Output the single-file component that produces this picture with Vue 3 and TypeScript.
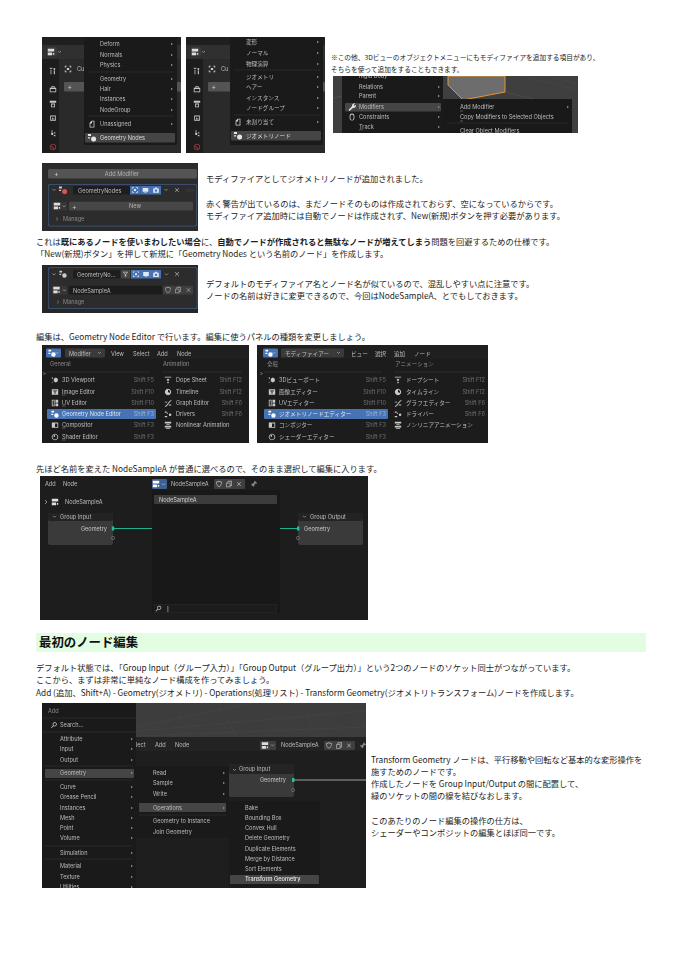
<script setup lang="ts">
import { h } from 'vue'

type Box = [number, number, number, number, string, number?]
type Line = [number, number, number, number, string, number?]
type Label = [number, number, string, string?, string?, number?, number?]
type Mark = [string, number, number, string?, number?]

interface Fig {
  w: number
  h: number
  ox?: number
  bg: string
  boxes: Box[]
  lines?: Line[]
  labels: Label[]
  tris?: [number, number][]
  marks?: Mark[]
  polys?: [string, string, string, number][]
}

const TXT = '#bdbdbd'
const DIM = '#8a8a8a'
const MENU = '#1a1a1a'
const BLUE = '#4772b3'
const SEP = '#303030'

// icon strokes on a 10x10 box: [path, fill]
const ICONS: Record<string, [string, string?][]> = {
  nodes: [['M.5 1h3.4v2.2H.5zM.5 4.6h2.4v1.6H.5z'], ['M4 6.8a2.8 2.8 0 1 0 5.6 0a2.8 2.8 0 1 0-5.6 0z']],
  nodesRed: [['M.5 1h3.4v2.2H.5zM.5 4.6h2.4v1.6H.5z'], ['M4 6.8a2.8 2.8 0 1 0 5.6 0a2.8 2.8 0 1 0-5.6 0z', '#e0505a']],
  doc: [['M2 9.5V3.5L4.5 1H8v8.5zM3 8.5h4V2H5v2.5H3z']],
  tree: [['M1 .8h8v3.6H1zM1 5.6h5.4v3.6H1zM7.4 6.4H9v2H7.4z']],
  ring: [['M5 .8a4.2 4.2 0 1 0 .01 0zM5 2.4a2.6 2.6 0 1 1-.01 0z']],
  select: [['M1 1h2.4v1H2v1.4H1zM6.6 1H9v2.4H8V2H6.6zM1 6.6h1V8h1.4v1H1zM8 6.6h1V9H6.6V8H8zM3.6 3.6h2.8v2.8H3.6z']],
  tool: [['M2 9V3.5h1V9zM1 2.5V1h1v.8h1V1h1v1.5zM6 9V5h1.4v4zM5.5 1.5h2.4l-.5 3H6z']],
  box: [['M1 3.5h8V9H1zM3 3.5V1.5h4v2H6V2.5H4v1zM2 5v3h6V5z']],
  printer: [['M1 1h8v2.5H1zM2.5 4.5h5V9h-5zM3.5 5.5v2.5h3V5.5z']],
  image: [['M1 1.5h8v7H1zM2.4 3v1.2h2v3h1.2v-3h2V3z']],
  photo: [['M1.5 2h7v6.5h-7zM2.5 3v4.5h5V3zM3 7l1.5-2.5 1 1.5 1-.8L7.2 7z']],
  wrench: [['M1 8.2L5 4.2a2.6 2.6 0 0 1 3.6-3L7 2.8 7.8 4l1.5-1.4A2.6 2.6 0 0 1 6 6L2.2 9.5z']],
  world: [['M5 1a4 4 0 1 0 .01 0zM5 2a3 3 0 1 1-.01 0z', '#b04048'], ['M3 3l4 4.4-.7.6L2.4 3.6z', '#b04048']],
  particles: [['M3 2h1.5v1.5H3zM6.5 4h1.5v1.5H6.5zM2.5 6a1.5 1.5 0 1 0 3 0a1.5 1.5 0 1 0-3 0zM6 7.5h2V9H6z']],
  constraint: [['M2 3.5a3 3 0 1 1 6 0v3a3 3 0 1 1-6 0zM3 4v2.6a2 2 0 1 0 4 0V4a2 2 0 1 0-4 0z']],
  viewport: [['M1 8l2.5-1.5V3.5L6 2l2.5 1.5v3L6 8 3.5 6.5 1 9z'], ['M1 2h1.5v1.5H1z']],
  uv: [['M1 1h3.5v8H1zM2 2v6h1.5V2zM5.6 1H9v3.6H5.6zM5.6 5.6H9V9H5.6z']],
  comp: [['M1 2h8v6.5H1zM5 3v4.5h3V3z']],
  shader: [['M5 1a4 4 0 1 0 .01 0zM5 2a3 3 0 1 1-.01 0zM5 2.6a2.4 2.4 0 0 0-2.2 1.6L5 5z']],
  dope: [['M1 1h8v1H1zM5 3l1.8 1.8L5 6.6 3.2 4.8zM5 7l1.2 1.2L5 9.4 3.8 8.2z']],
  timeline: [['M5 1a4 4 0 1 0 .01 0zM5 2.2L5 5l2.4 1.4A3 3 0 0 0 5 2.2z']],
  graph: [['M1 9c3-.4 3.4-5 8-7.6l.4.8C5.4 4.6 5 9.2 1.4 10z'], ['M1 3.4h3v1H1zM6 7h3v1H6z']],
  drivers: [['M1 2h2.4v1.4H1zM3.6 3.4h1.4v1.4H3.6zM6 6a1.6 1.6 0 1 0 3.2 0a1.6 1.6 0 1 0-3.2 0zM1 7.6h3V9H1z']],
  nla: [['M1 1h8v2.2H1zM3 4h4v1H3zM1 6h8v2.2H1zM2.4 8.8h5.2v.8H2.4z']],
  search: [['M6 1a3 3 0 1 0 .01 0zM6 2a2 2 0 1 1-.01 0zM3.6 5.7l.8.7L1.6 9.2.8 8.5z']],
  shield: [['M5 1l3.6 1.2c0 3.4-1 5.6-3.6 6.8C2.4 7.8 1.4 5.6 1.4 2.2zM5 2.1L2.4 3c.1 2.4.9 4 2.6 4.9C6.7 7 7.5 5.4 7.6 3z']],
  copy: [['M1.4 3.4H3V2l1-1h4.6v6.4H6.8V9H1.4zM2.4 4.4v3.6h3.4V4.4zM4 2.2v1.2h2.8v3h.8V2.2z']],
  cross: [['M2.2 1.5L5 4.3l2.8-2.8.7.7L5.7 5l2.8 2.8-.7.7L5 5.7 2.2 8.5l-.7-.7L4.3 5 1.5 2.2z']],
  pin: [['M6 1l3 3-1 .6-.7-.4-2 2 .2 1.6-.8.6L2.8 7 1.2 9.2.8 8.8 3 7.2 1.2 5.4l.6-.8 1.6.2 2-2-.4-.7z']],
  funnel: [['M1 1.4h8L6 5.4V9L4 7.8V5.4zM2.8 2.4L5 5l2.2-2.6z']],
  screen: [['M1 2h8v5.4H1zM3 8.2h4V9H3z']],
  camera: [['M1 3h2l.8-1.4h2.4L7 3h2v6H1zM5 4a1.8 1.8 0 1 0 .01 0z']]
}

const chev = (x: number, y: number, c = TXT): Line[] => [
  [x, y, x + 1.5, y + 1.5, c, 0.6],
  [x + 1.5, y + 1.5, x + 3, y, c, 0.6]
]

function menu(rows: [string, number][], x: number, arrowX?: number) {
  const labels: Label[] = rows.map(([s, y]) => [x, y + 2, s])
  const tris: [number, number][] =
    arrowX === undefined ? [] : rows.map(([, y]) => [arrowX, y] as [number, number])
  return { labels, tris }
}

function propsBase(menuX: number, hiY: number): Pick<Fig, 'boxes' | 'marks' | 'labels' | 'lines'> {
  return {
    boxes: [
      [0, 0, 139, 8, '#1f1f1f', 2],
      [0, 22, 17, 94, '#1d1d1d'],
      [0, 8, 139, 14, '#303030'],
      [5, 10, 10, 9, '#3a3a3a', 1],
      [22, 45, 117, 9.5, '#545454', 1],
      [menuX, 0, 93, 108, MENU, 1],
      [menuX + 1, hiY, 90, 9.5, '#454545', 1]
    ],
    marks: [
      ['tree', 9, 15, '#ddd', 8],
      ['tool', 11, 34, '#c9c9c9', 8],
      ['box', 11, 52, '#c9c9c9', 8],
      ['printer', 11, 67, '#c9c9c9', 8],
      ['photo', 11, 81, '#c9c9c9', 8],
      ['particles', 11, 96, '#c9c9c9', 8],
      ['world', 11, 110, '#b04048', 8],
      ['select', 26, 32, '#d0d0d0', 8]
    ],
    labels: [
      [35, 34, 'Cu'],
      [25.5, 52, '+', '#ccc', 'start', 7]
    ],
    lines: chev(16, 14)
  }
}

const enRows = menu(
  [['Deform', 7], ['Normals', 18], ['Physics', 28], ['Geometry', 42], ['Hair', 52], ['Instances', 62], ['NodeGroup', 73], ['Unassigned', 87]],
  58,
  129
)
const base1 = propsBase(42, 96)
const nodesMenuEn: Fig = {
  w: 139,
  h: 116,
  bg: '#2a2a2a',
  boxes: base1.boxes,
  lines: [...(base1.lines as Line[]), [46, 35, 132, 35, SEP], [46, 79, 132, 79, SEP]],
  labels: [...base1.labels, ...enRows.labels, [58, 102.5, 'Geometry Nodes', '#dcdcdc']],
  tris: enRows.tris,
  marks: [...(base1.marks as Mark[]), ['doc', 50, 87, '#ccc', 8], ['nodes', 50, 100.5, '#e4e4e4', 9]]
}

const jaRows = menu(
  [['変形', 5], ['ノーマル', 16], ['物理演算', 27], ['ジオメトリ', 40], ['ヘアー', 50], ['インスタンス', 61], ['ノードグループ', 71], ['未割り当て', 85]],
  60,
  131
)
const base2 = propsBase(44, 94)
const nodesMenuJa: Fig = {
  w: 139,
  h: 116,
  bg: '#2a2a2a',
  boxes: base2.boxes,
  lines: [...(base2.lines as Line[]), [48, 33, 134, 33, SEP], [48, 78, 134, 78, SEP]],
  labels: [...base2.labels, ...jaRows.labels, [60, 100.5, 'ジオメトリノード', '#dcdcdc']],
  tris: jaRows.tris,
  marks: [...(base2.marks as Mark[]), ['doc', 52, 85, '#ccc', 8], ['nodes', 52, 98.5, '#e4e4e4', 9]]
}

const objRows = menu([['Relations', 11], ['Parent', 20], ['Modifiers', 31], ['Constraints', 41], ['Track', 51]], 26, 105)
const objectMenu: Fig = {
  w: 245,
  h: 57,
  bg: '#3f3f3f',
  boxes: [
    [9, 0, 101, 57, MENU],
    [12, 27, 96, 8.5, '#454545', 1],
    [110, 23, 129, 34, '#191919', 1]
  ],
  polys: [['115,0 115,9 130,24 172,16 172,0', '#6d6d6d', '#e8932c', 1]],
  lines: [
    [0, 22, 9, 20, '#55623f', 0.6],
    [172, 16, 200, 23, '#7a4646', 0.5],
    [190, 0, 245, 14, '#4b4b4b', 0.5],
    [215, 0, 245, 8, '#4b4b4b', 0.5],
    [114, 47, 236, 47, SEP],
    [26, 53.8, 30, 53.8, TXT, 0.4],
    [127, 35, 130, 35, TXT, 0.4],
    [127, 45, 130, 45, TXT, 0.4]
  ],
  labels: [
    [26, 1.5, 'Rigid Body'],
    ...objRows.labels,
    [127, 33, 'Add Modifier'],
    [127, 43, 'Copy Modifiers to Selected Objects'],
    [127, 57, 'Clear Object Modifiers']
  ],
  tris: [...objRows.tris, [234, 31]],
  marks: [
    ['wrench', 19, 31, '#ddd', 9],
    ['constraint', 19, 41, '#ccc', 8]
  ]
}

const addModifier: Fig = {
  w: 156,
  h: 68,
  bg: '#2b2b2b',
  boxes: [
    [6, 6, 149, 9.5, '#545454', 1.5],
    [6, 21, 149, 42.5, '#3d5a80', 2],
    [6.7, 21.7, 147.6, 41, '#2c2c2c', 2],
    [31, 23, 57, 8.5, '#1e1e1e', 1],
    [88, 23, 10.5, 8.5, BLUE],
    [98.5, 23, 10.5, 8.5, BLUE],
    [109, 23, 10, 8.5, BLUE],
    [27, 38.7, 124, 8.7, '#474747', 1],
    [10, 38.7, 15, 8.7, '#363636', 1]
  ],
  lines: [
    ...chev(10.5, 26),
    ...chev(20.5, 42.5),
    ...chev(122.5, 26),
    [144, 26, 152, 26, '#444', 0.5],
    [144, 28, 152, 28, '#444', 0.5],
    [14, 54.5, 16, 56, DIM, 0.6],
    [16, 56, 14, 57.5, DIM, 0.6]
  ],
  labels: [
    [12, 12.7, '+', '#ccc', 'start', 7],
    [80, 13, 'Add Modifier', '#b4b4b4', 'middle'],
    [36, 29.5, 'GeometryNodes'],
    [30, 45.8, '+', '#ccc', 'start', 7],
    [93, 45.2, 'New', '#b4b4b4', 'middle'],
    [21, 58, 'Manage', DIM]
  ],
  marks: [
    ['nodesRed', 21, 27, '#ccc', 9],
    ['tree', 15, 43, '#ddd', 8],
    ['select', 93, 27, '#dfe8f6', 7],
    ['screen', 103.5, 27, '#dfe8f6', 7],
    ['camera', 114, 27, '#dfe8f6', 7],
    ['cross', 135, 27, '#b5b5b5', 6]
  ]
}

const sampleModifier: Fig = {
  w: 156,
  h: 48,
  bg: '#262626',
  boxes: [
    [6, 2.3, 149.5, 41.7, '#3d5a80', 2],
    [6.7, 3, 148, 40.3, '#2c2c2c', 2],
    [31, 5, 47, 8.5, '#1e1e1e', 1],
    [79, 5, 9, 8.5, '#454545'],
    [89, 5, 10, 8.5, BLUE],
    [99, 5, 10, 8.5, BLUE],
    [109, 5, 10, 8.5, BLUE],
    [10, 20.7, 15, 8.7, '#363636', 1],
    [26.7, 20.7, 93.5, 8.7, '#1c1c1c', 1],
    [121, 20.7, 30, 8.7, '#3e3e3e', 1]
  ],
  lines: [
    ...chev(10.5, 8.5),
    ...chev(21, 24.5),
    ...chev(123, 8.5),
    [15, 35.5, 17, 37, DIM, 0.6],
    [17, 37, 15, 38.5, DIM, 0.6]
  ],
  labels: [
    [35, 11.5, 'GeometryNo...'],
    [31, 27.5, 'NodeSampleA'],
    [21, 39, 'Manage', DIM]
  ],
  marks: [
    ['nodes', 21, 9, '#ccc', 8],
    ['funnel', 83.5, 9.2, '#bbb', 7],
    ['select', 94, 9.2, '#dfe8f6', 7],
    ['screen', 104, 9.2, '#dfe8f6', 7],
    ['camera', 114, 9.2, '#dfe8f6', 7],
    ['cross', 135, 9.2, '#b5b5b5', 6],
    ['tree', 14.5, 25, '#ddd', 8],
    ['shield', 126, 25, '#999', 8],
    ['copy', 136, 25, '#999', 8],
    ['cross', 146.5, 25, '#999', 6]
  ]
}

const EDITOR_Y = [35, 47, 58, 69, 80, 92]
const LEFT_ICONS = ['viewport', 'image', 'uv', 'nodes', 'comp', 'shader']
const RIGHT_ICONS = ['dope', 'timeline', 'graph', 'drivers', 'nla']

interface EditorCfg {
  w: number
  ox?: number
  tabs: [string, number][]
  modeX: number
  modeW: number
  mode: string
  general: string
  anim: string
  animX: number
  left: [string, string][]
  right: [string, string][]
  leftEnd: number
  rightIcon: number
  rightEnd: number
  underline: number
}

function editorFig(c: EditorCfg): Fig {
  const rightText = c.rightIcon + 8
  const labels: Label[] = [
    [c.modeX + 4, 10.5, c.mode],
    ...c.tabs.map(([s, x]) => [x, 10.5, s] as Label),
    [10, 21, c.general, DIM],
    [c.animX, 21, c.anim, DIM],
    [2.5, 31, '>', DIM]
  ]
  c.left.forEach(([s, k], i) => {
    const active = i === 3
    labels.push([22, EDITOR_Y[i] + 2, s, active ? '#dfe6f2' : TXT])
    labels.push([c.leftEnd, EDITOR_Y[i] + 2, k, active ? '#9db4d8' : '#6f6f6f', 'end'])
  })
  c.right.forEach(([s, k], i) => {
    labels.push([rightText, EDITOR_Y[i] + 2, s])
    if (k) labels.push([c.rightEnd, EDITOR_Y[i] + 2, k, '#6f6f6f', 'end'])
  })
  return {
    w: c.w,
    ox: c.ox,
    h: 98,
    bg: '#1c1c1c',
    boxes: [
      [0, 0, c.w, 14, '#1f1f1f'],
      [6, 3.5, 15, 9, BLUE, 1],
      [c.modeX, 3.5, c.modeW, 9, '#3a3a3a', 1],
      [7, 64, c.leftEnd - 5, 10, BLUE, 1]
    ],
    lines: [
      ...chev(15.5, 7),
      ...chev(c.modeX + c.modeW - 7, 7),
      [7, 27, c.leftEnd - 4, 27, SEP],
      [c.animX - 1, 27, c.w - 7, 27, SEP],
      ...[47, 58, 69, 80, 92].map((y) => [22, y + 3, 22 + c.underline, y + 3, TXT, 0.4] as Line)
    ],
    labels,
    marks: [
      ['nodes', 12, 8, '#fff', 8],
      ...LEFT_ICONS.map((n, i) => [n, 15, EDITOR_Y[i], i === 3 ? '#fff' : '#c9c9c9', 8] as Mark),
      ...RIGHT_ICONS.map((n, i) => [n, c.rightIcon, EDITOR_Y[i], '#c9c9c9', 8] as Mark)
    ]
  }
}

const editorsEn = editorFig({
  w: 209,
  ox: 2,
  tabs: [['View', 71], ['Select', 93], ['Add', 117], ['Node', 137]],
  modeX: 25,
  modeW: 40,
  mode: 'Modifier',
  general: 'General',
  anim: 'Animation',
  animX: 123,
  left: [
    ['3D Viewport', 'Shift F5'],
    ['Image Editor', 'Shift F10'],
    ['UV Editor', 'Shift F10'],
    ['Geometry Node Editor', 'Shift F3'],
    ['Compositor', 'Shift F3'],
    ['Shader Editor', 'Shift F3']
  ],
  right: [
    ['Dope Sheet', 'Shift F12'],
    ['Timeline', 'Shift F12'],
    ['Graph Editor', 'Shift F6'],
    ['Drivers', 'Shift F6'],
    ['Nonlinear Animation', '']
  ],
  leftEnd: 114,
  rightIcon: 128,
  rightEnd: 202,
  underline: 3.5
})

const editorsJa = editorFig({
  w: 231,
  tabs: [['ビュー', 94], ['選択', 118], ['追加', 137], ['ノード', 157]],
  modeX: 24,
  modeW: 63,
  mode: 'モディファイアー',
  general: '全般',
  anim: 'アニメーション',
  animX: 138,
  left: [
    ['3Dビューポート', 'Shift F5'],
    ['画像エディター', 'Shift F10'],
    ['UVエディター', 'Shift F10'],
    ['ジオメトリノードエディター', 'Shift F3'],
    ['コンポジター', 'Shift F3'],
    ['シェーダーエディター', 'Shift F3']
  ],
  right: [
    ['ドープシート', 'Shift F12'],
    ['タイムライン', 'Shift F12'],
    ['グラフエディター', 'Shift F6'],
    ['ドライバー', 'Shift F6'],
    ['ノンリニアアニメーション', '']
  ],
  leftEnd: 129,
  rightIcon: 141,
  rightEnd: 228,
  underline: 0
})

const GREEN = '#1fc19a'

const nodePicker: Fig = {
  w: 328,
  h: 144,
  bg: '#1d1d1d',
  boxes: [
    [112, 3, 15, 10, '#3d5f92', 1],
    [174, 3, 31, 10, '#3f3f3f', 1],
    [8, 37, 65, 32, '#3a3a3a', 2],
    [8, 37, 65, 8, '#232323', 2],
    [258, 37, 65, 32, '#3a3a3a', 2],
    [258, 37, 65, 8, '#232323', 2],
    [112, 14, 128, 123, '#181818', 1],
    [114, 19, 123, 9, '#3c3c3c', 1],
    [114, 128, 123, 9, '#2b2b2b', 1],
    [114.5, 128.5, 122, 8, '#1c1c1c', 1],
    [127.5, 130, 0.8, 6, '#7aa5e8'],
    [71.8, 50.5, 2.4, 4, GREEN],
    [257, 50.5, 2.4, 4, GREEN]
  ],
  lines: [
    [74, 52.5, 112, 52.5, GREEN, 0.9],
    [240, 52.5, 257, 52.5, GREEN, 0.9],
    [5, 24, 7, 26, '#bbb', 0.7],
    [7, 26, 5, 28, '#bbb', 0.7],
    ...chev(122, 7.5, '#ddd'),
    ...chev(13, 39.8),
    ...chev(263, 39.8)
  ],
  labels: [
    [5, 10, 'Add'],
    [23, 10, 'Node'],
    [131, 10, 'NodeSampleA'],
    [25, 28, 'NodeSampleA'],
    [20, 42.5, 'Group Input'],
    [270, 42.5, 'Group Output'],
    [67, 54.5, 'Geometry', '#c8c8c8', 'end'],
    [264, 54.5, 'Geometry', '#c8c8c8'],
    [119, 26, 'NodeSampleA', '#d0d0d0']
  ],
  marks: [
    ['tree', 116, 8, '#fff', 8],
    ['tree', 15, 26, '#ddd', 8],
    ['shield', 179, 8, '#aaa', 8],
    ['copy', 189, 8, '#aaa', 8],
    ['cross', 199, 8, '#bbb', 6],
    ['pin', 214, 8, '#888', 8],
    ['search', 118.5, 132.5, '#ccc', 7],
    ['ring', 73, 62, '#6e6e6e', 4.5],
    ['ring', 258, 62, '#6e6e6e', 4.5]
  ]
}

const addRows = menu(
  [['Attribute', 36], ['Input', 46], ['Output', 57], ['Geometry', 70], ['Curve', 84], ['Grease Pencil', 94], ['Instances', 105], ['Mesh', 115], ['Point', 125], ['Volume', 135], ['Simulation', 150], ['Material', 163], ['Texture', 174], ['Utilities', 184]],
  18,
  89
)
const geoRows = menu([['Read', 70], ['Sample', 80], ['Write', 91], ['Operations', 105]], 111, 181)
const opRows = menu([['Bake', 105], ['Bounding Box', 115], ['Convex Hull', 125], ['Delete Geometry', 135], ['Duplicate Elements', 146], ['Merge by Distance', 156], ['Sort Elements', 166]], 203)

const addMenu: Fig = {
  w: 324,
  h: 185,
  bg: '#1e1e1e',
  boxes: [
    [0, 0, 324, 34, '#3d3d3d'],
    [0, 34, 324, 14, '#232323'],
    [218, 38, 16, 9, '#3e3e3e', 1],
    [282, 38, 31, 9, '#3f3f3f', 1],
    [94, 63, 93, 72, MENU],
    [187, 61, 65, 33, '#3a3a3a', 2],
    [187, 61, 65, 10, '#242424', 2],
    [187, 98, 91, 87, MENU],
    [0, 0, 94, 185, MENU],
    [3, 66, 89, 9, '#454545', 1],
    [97, 100, 87, 9, '#454545', 1],
    [188, 172, 89, 9, '#454545', 1],
    [250, 75, 2.4, 4, GREEN]
  ],
  lines: [
    [94, 24, 210, 0, '#4c4c4c', 0.4],
    [130, 0, 150, 34, '#4c4c4c', 0.4],
    [175, 0, 195, 34, '#4c4c4c', 0.4],
    [94, 28, 324, 8, '#4c4c4c', 0.4],
    [260, 0, 275, 34, '#4c4c4c', 0.4],
    [94, 33, 324, 24, '#4c4c4c', 0.4],
    [0, 15, 94, 15, SEP],
    [0, 29, 94, 29, SEP],
    [3, 63, 91, 63, SEP],
    [3, 77, 91, 77, SEP],
    [3, 143, 91, 143, SEP],
    [3, 156, 91, 156, SEP],
    [97, 112, 184, 112, SEP],
    [252, 77, 324, 77, '#d4d4d4', 0.7],
    ...chev(229, 41.5),
    ...chev(191, 66)
  ],
  labels: [
    [6, 10, 'Add', DIM],
    [18, 24, 'Search...'],
    ...addRows.labels,
    [94, 44, 'lect'],
    [113, 44, 'Add'],
    [133, 44, 'Node'],
    [239, 44, 'NodeSampleA'],
    [197, 68, 'Group Input'],
    [244, 79, 'Geometry', '#c8c8c8', 'end'],
    ...geoRows.labels,
    [111, 120, 'Geometry to Instance'],
    [111, 131, 'Join Geometry'],
    ...opRows.labels,
    [203, 178, 'Transform Geometry', '#ececec', 'start', 5.6, 500]
  ],
  tris: [...addRows.tris, ...geoRows.tris],
  marks: [
    ['search', 12, 22, '#ccc', 7],
    ['tree', 223, 42.5, '#ddd', 8],
    ['shield', 287, 42.5, '#aaa', 8],
    ['copy', 297, 42.5, '#aaa', 8],
    ['cross', 307, 42.5, '#bbb', 6],
    ['pin', 321, 42.5, '#888', 8],
    ['ring', 251, 87, '#6e6e6e', 4.5]
  ]
}

// draws one screenshot from its data, real text on top of simple shapes
const Shot = (p: { fig: Fig }) => {
  const f = p.fig
  const ox = f.ox ?? 0
  const kids: any[] = [h('rect', { width: f.w, height: f.h, fill: f.bg })]
  f.polys?.forEach((q) => kids.push(h('polygon', { points: q[0], fill: q[1], stroke: q[2], 'stroke-width': q[3] })))
  f.boxes.forEach(([x, y, width, height, fill, rx]) => kids.push(h('rect', { x, y, width, height, fill, rx: rx ?? 0 })))
  f.lines?.forEach(([x1, y1, x2, y2, stroke, w]) => kids.push(h('line', { x1, y1, x2, y2, stroke, 'stroke-width': w ?? 0.7 })))
  f.tris?.forEach(([x, y]) => kids.push(h('polygon', { points: `${x},${y - 1.3} ${x + 2},${y} ${x},${y + 1.3}`, fill: '#8a8a8a' })))
  f.marks?.forEach(([name, x, y, color, size]) => {
    const s = (size ?? 7) / 10
    kids.push(
      h('g', { transform: `translate(${x - 5 * s} ${y - 5 * s}) scale(${s})` },
        ICONS[name].map(([d, fill]) => h('path', { d, fill: fill ?? color ?? TXT, 'fill-rule': 'evenodd' })))
    )
  })
  f.labels.forEach(([x, y, s, fill, anchor, size, weight]) =>
    kids.push(h('text', { x, y, fill: fill ?? TXT, 'text-anchor': anchor ?? 'start', 'font-size': size ?? 5.6, 'font-weight': weight ?? 400 }, s))
  )
  return h('svg', { class: 'shot', width: f.w - ox, height: f.h, viewBox: `${ox} 0 ${f.w - ox} ${f.h}` }, kids)
}
</script>

<template>
  <div class="page">
    <section class="row row--top">
      <Shot :fig="nodesMenuEn" />
      <Shot :fig="nodesMenuJa" />
      <div class="note">
        <p>※この他、3Dビューのオブジェクトメニューにもモディファイアを追加する項目があり、<br />そちらを使って追加をすることもできます。</p>
        <Shot :fig="objectMenu" />
      </div>
    </section>

    <section class="row row--modifier">
      <Shot :fig="addModifier" />
      <div class="side side--first">
        <p>モディファイアとしてジオメトリノードが追加されました。</p>
        <p class="gap">赤く警告が出ているのは、まだノードそのものは作成されておらず、空になっているからです。<br />モディファイア追加時には自動でノードは作成されず、New(新規)ボタンを押す必要があります。</p>
      </div>
    </section>

    <p class="para para--why">これは<b>既にあるノードを使いまわしたい場合</b>に、<b>自動でノードが作成されると無駄なノードが増えてしまう</b>問題を回避するための仕様です。<br />「New(新規)ボタン」を押して新規に「Geometry Nodes という名前のノード」を作成します。</p>

    <section class="row row--sample">
      <Shot :fig="sampleModifier" />
      <div class="side side--second">
        <p>デフォルトのモディファイア名とノード名が似ているので、混乱しやすい点に注意です。<br />ノードの名前は好きに変更できるので、今回はNodeSampleA、とでもしておきます。</p>
      </div>
    </section>

    <p class="para para--editor">編集は、Geometry Node Editor で行います。編集に使うパネルの種類を変更しましょう。</p>
    <section class="row row--editors">
      <Shot :fig="editorsEn" />
      <Shot :fig="editorsJa" />
    </section>

    <p class="para para--pick">先ほど名前を変えた NodeSampleA が普通に選べるので、そのまま選択して編集に入ります。</p>
    <section class="row row--picker">
      <Shot :fig="nodePicker" />
    </section>

    <h2 class="heading">最初のノード編集</h2>

    <p class="para para--intro">デフォルト状態では、「Group Input（グループ入力）」「Group Output（グループ出力）」という2つのノードのソケット同士がつながっています。<br />ここから、まずは非常に単純なノード構成を作ってみましょう。<br />Add (追加、Shift+A) - Geometry(ジオメトリ) - Operations(処理リスト) - Transform Geometry(ジオメトリトランスフォーム)ノードを作成します。</p>

    <section class="row row--add">
      <Shot :fig="addMenu" />
      <div class="side side--last">
        <p>Transform Geometry ノードは、平行移動や回転など基本的な変形操作を<br />施すためのノードです。<br />作成したノードを Group Input/Output の間に配置して、<br />緑のソケットの間の線を結びなおします。</p>
        <p class="gap">このあたりのノード編集の操作の仕方は、<br />シェーダーやコンポジットの編集とほぼ同一です。</p>
      </div>
    </section>
  </div>
</template>

<style>
html,
body {
  background: #ffffff;
}

.shot {
  display: block;
  flex: none;
  font-family: Inter, "Noto Sans CJK JP", sans-serif;
  filter: blur(0.25px);
}
</style>

<style scoped>
.page {
  box-sizing: border-box;
  width: 682px;
  height: 965px;
  padding: 37px 36px 0;
  overflow: hidden;
  background: #ffffff;
  color: #1c1c1c;
  font-family: "Noto Sans CJK JP", sans-serif;
  font-size: 8.25px;
  line-height: 12.3px;
}

p {
  margin: 0;
}

.row {
  display: flex;
  padding-left: 6px;
}

.row--top {
  gap: 5px;
}

.note {
  margin-left: 1px;
  padding-top: 14px;
  display: flex;
  flex-direction: column;
  font-size: 6.7px;
  line-height: 12px;
}

.note .shot {
  margin: 1px 0 0 2px;
}

.row--modifier {
  margin-top: 10px;
}

.side {
  margin-left: 8px;
}

.side--first {
  padding-top: 9px;
}

.gap {
  margin-top: 12.4px;
}

.para--why {
  margin-top: 4px;
}

.row--sample {
  margin-top: 5px;
}

.side--second {
  padding-top: 12px;
}

.para--editor {
  margin-top: 17px;
}

.row--editors {
  margin-top: 3px;
  gap: 8px;
}

.para--pick {
  margin-top: 19px;
}

.row--picker {
  margin-top: 2px;
  padding-left: 4px;
}

.heading {
  margin: 13px 0 0;
  width: 610px;
  height: 19px;
  padding-left: 3px;
  box-sizing: border-box;
  background: #e2fde2;
  font-size: 12.4px;
  line-height: 19px;
  font-weight: 700;
  color: #111111;
}

.para--intro {
  margin-top: 9px;
}

.row--add {
  margin-top: 5px;
}

.side--last {
  margin-left: 5px;
  padding-top: 49.5px;
}
</style>
